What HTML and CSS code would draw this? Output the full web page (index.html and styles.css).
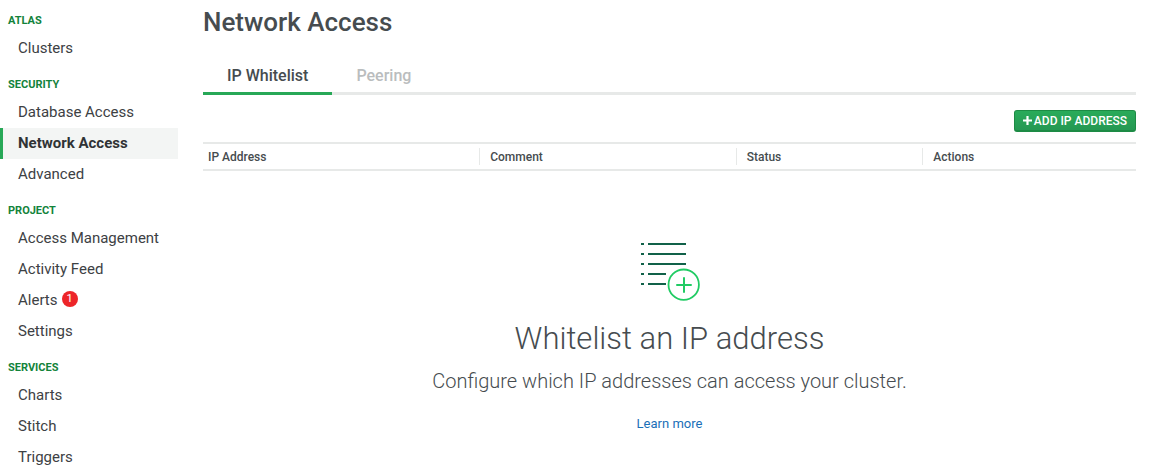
FILE: index.html
```html
<!DOCTYPE html>
<html lang="en">
<head>
<meta charset="utf-8">
<title>Network Access</title>
<link rel="stylesheet" href="styles.css">
</head>
<body>
<div class="shell">
  <nav class="sidebar" aria-label="Main">
    <h2 class="nav-heading">ATLAS</h2>
    <a class="nav-item" href="#">Clusters</a>
    <h2 class="nav-heading">SECURITY</h2>
    <a class="nav-item" href="#">Database Access</a>
    <a class="nav-item nav-item-active" href="#" aria-current="page">Network Access</a>
    <a class="nav-item" href="#">Advanced</a>
    <h2 class="nav-heading">PROJECT</h2>
    <a class="nav-item" href="#">Access Management</a>
    <a class="nav-item" href="#">Activity Feed</a>
    <a class="nav-item" href="#">Alerts<span class="badge">1</span></a>
    <a class="nav-item" href="#">Settings</a>
    <h2 class="nav-heading">SERVICES</h2>
    <a class="nav-item" href="#">Charts</a>
    <a class="nav-item" href="#">Stitch</a>
    <a class="nav-item" href="#">Triggers</a>
  </nav>
  <main class="main">
    <h1 class="title">Network Access</h1>
    <div class="tabs" role="tablist">
      <button class="tab tab-active" type="button" role="tab" aria-selected="true">IP Whitelist</button>
      <button class="tab" type="button" role="tab" aria-selected="false">Peering</button>
    </div>
    <div class="toolbar">
      <button class="add-button" type="button">
        <svg class="plus" viewBox="0 0 9 9" aria-hidden="true"><path d="M3.4 0h2.2v3.4H9v2.2H5.6V9H3.4V5.6H0V3.4h3.4z" fill="currentColor"/></svg>
        ADD IP ADDRESS
      </button>
    </div>
    <table class="table">
      <thead>
        <tr>
          <th class="col-address"><span class="cell">IP Address</span></th>
          <th class="col-comment"><span class="cell">Comment</span></th>
          <th class="col-status"><span class="cell">Status</span></th>
          <th><span class="cell">Actions</span></th>
        </tr>
      </thead>
    </table>
    <section class="empty">
      <svg class="empty-icon" viewBox="0 0 60 60" aria-hidden="true">
        <path d="M1 3h3M8 3h38M1 13h3M8 13h38M1 23h3M8 23h38M1 33h3M8 33h18M1 43h3M8 43h18" stroke="#116149" stroke-width="2" fill="none"/>
        <circle cx="43.7" cy="43.7" r="15.2" fill="none" stroke="#21cb64" stroke-width="1.8"/>
        <path d="M37 44h14M44 37v14" stroke="#21cb64" stroke-width="2" stroke-linecap="round"/>
      </svg>
      <h2 class="empty-title">Whitelist an IP address</h2>
      <p class="empty-text">Configure which IP addresses can access your cluster.</p>
      <a class="learn" href="#">Learn more</a>
    </section>
  </main>
</div>
</body>
</html>
```
FILE: styles.css
```css
* { box-sizing: border-box; }

body {
  margin: 0;
  background: #fff;
  color: #464c4f;
  font-family: Roboto, "Liberation Sans", sans-serif;
}

.shell {
  display: flex;
  gap: 25px;
  height: 100vh;
  padding-right: 17px;
  overflow: hidden;
}

.sidebar { flex: 0 0 178px; }

.nav-heading {
  margin: 0;
  padding: 14px 8px 5px;
  color: #13833b;
  font-size: 11px;
  font-weight: 700;
  line-height: 14px;
}

.nav-item {
  display: flex;
  align-items: center;
  height: 31px;
  padding: 0 0 2px 18px;
  color: #3d4144;
  font-size: 15px;
  line-height: 20px;
  text-decoration: none;
}

.nav-item-active {
  padding-left: 15px;
  border-left: 3px solid #27a857;
  background: #f3f5f4;
  color: #303335;
  font-weight: 700;
}

.badge {
  width: 16px;
  height: 16px;
  margin: 0 0 2px 4px;
  border-radius: 8px;
  background: #ed2529;
  color: #fff;
  font-size: 11px;
  line-height: 16px;
  text-align: center;
}

.main { flex: 1; min-width: 0; }

.title {
  margin: 0;
  padding: 7px 0 23px;
  font-size: 26px;
  font-weight: 500;
  line-height: 30px;
}

.tabs {
  display: flex;
  border-bottom: 3px solid #e7e9e8;
}

.tab {
  margin: 0 0 -3px;
  padding: 6px 24px;
  border: 0;
  border-bottom: 3px solid transparent;
  background: none;
  color: #babdbe;
  font: 500 16px/20px Roboto, sans-serif;
}

.tab-active {
  border-color: #27a857;
  color: #464c4f;
}

.toolbar {
  display: flex;
  justify-content: flex-end;
  padding: 15px 0 10px;
}

.add-button {
  display: flex;
  align-items: center;
  gap: 2px;
  height: 22px;
  padding: 0 8px;
  border: 1px solid #1d8b45;
  border-bottom-width: 2px;
  border-radius: 3px;
  background: linear-gradient(#29ab5a, #269853);
  color: #fff;
  font: 500 12px/16px Roboto, sans-serif;
}

.plus { width: 9px; height: 9px; }

.table {
  width: 100%;
  border-collapse: separate;
  border-spacing: 0;
  border-top: 2px solid #e7e9e8;
  border-bottom: 2px solid #e7e9e8;
  table-layout: fixed;
}

.table th {
  padding: 4px 0;
  font-size: 12px;
  font-weight: 500;
  line-height: 15px;
  text-align: left;
}

.cell {
  display: block;
  padding: 2px 0 0 10px;
  border-left: 1px solid #e7e9e8;
}

.col-address { width: 29.6%; }
.col-comment { width: 27.5%; }
.col-status { width: 20%; }

.col-address .cell {
  padding-left: 5px;
  border-left: 0;
}

.empty {
  display: flex;
  flex-direction: column;
  align-items: center;
  padding-top: 70px;
  text-align: center;
}

.empty-icon { width: 60px; height: 60px; }

.empty-title {
  margin: 18px 0 0;
  font-size: 31px;
  font-weight: 300;
  line-height: 40px;
}

.empty-text {
  margin: 10px 0 0;
  font-size: 20px;
  font-weight: 300;
  line-height: 24px;
}

.learn {
  margin-top: 21px;
  color: #1a6fb8;
  font-size: 13px;
  line-height: 20px;
  text-decoration: none;
}
```
